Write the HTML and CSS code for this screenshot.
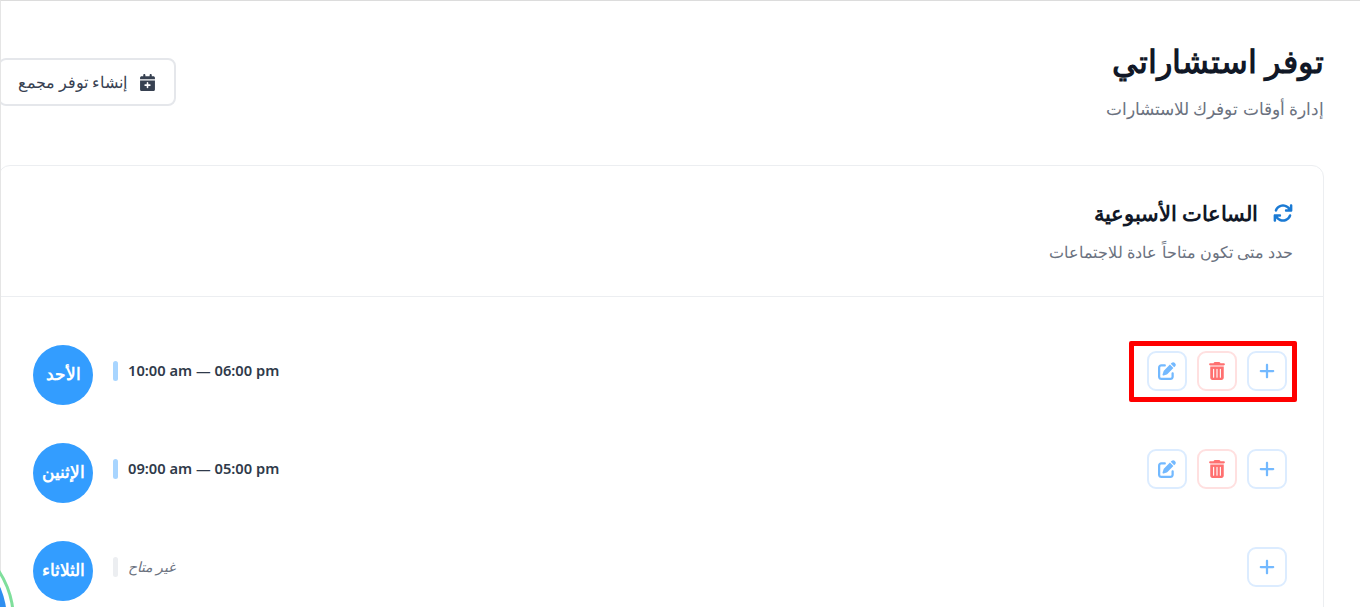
FILE: index.html
```html
<!DOCTYPE html>
<html lang="ar" dir="rtl">
<head>
    <meta charset="UTF-8">
    <meta name="viewport" content="width=device-width, initial-scale=1.0">
    <title>توفر استشاراتي</title>
    <link rel="stylesheet" href="styles.css">
</head>
<body>
    <main class="page">
        <header class="page-header">
            <div>
                <h1 class="page-title">توفر استشاراتي</h1>
                <p class="page-subtitle">إدارة أوقات توفرك للاستشارات</p>
            </div>
            <button class="btn-create">
                <svg class="icon-cal" viewBox="0 0 448 512"><path d="M128 0c17.700 0 32 14.300 32 32v32h128V32c0-17.700 14.300-32 32-32s32 14.300 32 32v32h48c26.500 0 48 21.500 48 48v48H0v-48c0-26.500 21.500-48 48-48h48V32c0-17.700 14.300-32 32-32zM0 192h448v272c0 26.500-21.500 48-48 48H48c-26.500 0-48-21.500-48-48V192zm224 48c-13.300 0-24 10.700-24 24v48h-48c-13.300 0-24 10.700-24 24s10.700 24 24 24h48v48c0 13.300 10.700 24 24 24s24-10.700 24-24v-48h48c13.300 0 24-10.700 24-24s-10.700-24-24-24h-48v-48c0-13.300-10.700-24-24-24z"/></svg>
                إنشاء توفر مجمع
            </button>
        </header>

        <section class="card">
            <div class="card-head">
                <h2 class="card-title">
                    <svg class="icon-sync" viewBox="0 0 512 512"><path d="M105.100 202.600c7.700-21.800 20.200-42.300 37.800-59.800 62.500-62.500 163.800-62.500 226.300 0l17.100 17.200H336c-17.700 0-32 14.300-32 32s14.300 32 32 32h127.900c17.700 0 32-14.300 32-32V64c0-17.700-14.300-32-32-32s-32 14.300-32 32v51.200l-17.500-17.600c-87.500-87.500-229.300-87.500-316.800 0-24.400 24.400-41.800 53.100-52.300 83.800-5.800 16.700 3 34.900 19.600 40.800s34.900-3 40.800-19.600zM39 289.300c-5 1.500-9.800 4.200-13.700 8.200-4 4-6.700 8.800-8.100 14-.3 1.200-.6 2.500-.8 3.800-.3 1.700-.4 3.400-.4 5.100V448c0 17.700 14.300 32 32 32s32-14.300 32-32v-51.100l17.600 17.500c87.500 87.400 229.300 87.400 316.700 0 24.400-24.400 41.900-53.100 52.400-83.700 5.800-16.700-3-34.900-19.600-40.800s-34.900 3-40.800 19.600c-7.700 21.800-20.200 42.300-37.800 59.800-62.500 62.500-163.800 62.500-226.300 0l-.1-.1-17.100-17.100H176c17.700 0 32-14.300 32-32s-14.300-32-32-32H48.400c-1.600 0-3.200.1-4.800.3s-3.100.5-4.600 1z"/></svg>
                    الساعات الأسبوعية
                </h2>
                <p class="card-desc">حدد متى تكون متاحاً عادة للاجتماعات</p>
            </div>
            <div class="days">
                <div class="day">
                    <div class="actions actions-marked">
                        <button class="act act-blue"><svg class="icon" viewBox="0 0 448 512"><path d="M256 80c0-17.700-14.300-32-32-32s-32 14.300-32 32v144H48c-17.700 0-32 14.300-32 32s14.300 32 32 32h144v144c0 17.700 14.300 32 32 32s32-14.300 32-32V288h144c17.700 0 32-14.300 32-32s-14.300-32-32-32H256V80z"/></svg></button>
                        <button class="act act-red"><svg class="icon" viewBox="0 0 448 512"><path d="M135.200 17.700C140.600 6.800 151.700 0 163.800 0h120.400c12.100 0 23.200 6.800 28.600 17.700L320 32h96c17.700 0 32 14.300 32 32s-14.300 32-32 32H32C14.300 96 0 81.700 0 64s14.300-32 32-32h96l7.200-14.300zM32 128h384v320c0 35.300-28.700 64-64 64H96c-35.300 0-64-28.700-64-64V128zm96 64c-8.800 0-16 7.200-16 16v224c0 8.800 7.200 16 16 16s16-7.200 16-16V208c0-8.800-7.200-16-16-16zm96 0c-8.800 0-16 7.200-16 16v224c0 8.800 7.200 16 16 16s16-7.200 16-16V208c0-8.800-7.200-16-16-16zm96 0c-8.800 0-16 7.200-16 16v224c0 8.800 7.200 16 16 16s16-7.200 16-16V208c0-8.800-7.200-16-16-16z"/></svg></button>
                        <button class="act act-blue"><svg class="icon" viewBox="0 0 512 512"><path d="M471.600 21.700c-21.900-21.900-57.300-21.900-79.200 0l-30.100 30 97.900 97.900 30.100-30.100c21.900-21.900 21.900-57.300 0-79.200l-18.700-18.600zM172.400 241.700c-6.100 6.100-10.800 13.600-13.500 21.900l-29.600 88.800c-2.900 8.600-.6 18.100 5.800 24.600s15.900 8.700 24.600 5.800l88.800-29.600c8.200-2.700 15.700-7.400 21.900-13.500l167.300-167.500-97.900-97.900-167.400 167.400zM96 64c-53 0-96 43-96 96v256c0 53 43 96 96 96h256c53 0 96-43 96-96v-96c0-17.700-14.300-32-32-32s-32 14.300-32 32v96c0 17.700-14.300 32-32 32H96c-17.700 0-32-14.300-32-32V160c0-17.700 14.300-32 32-32h96c17.700 0 32-14.300 32-32s-14.300-32-32-32H96z"/></svg></button>
                    </div>
                    <div class="slot">
                        <span class="time" dir="ltr">10:00 am — 06:00 pm</span>
                        <span class="bar"></span>
                        <span class="badge">الأحد</span>
                    </div>
                </div>
                <div class="day">
                    <div class="actions">
                        <button class="act act-blue"><svg class="icon" viewBox="0 0 448 512"><path d="M256 80c0-17.700-14.300-32-32-32s-32 14.300-32 32v144H48c-17.700 0-32 14.300-32 32s14.300 32 32 32h144v144c0 17.700 14.300 32 32 32s32-14.300 32-32V288h144c17.700 0 32-14.300 32-32s-14.300-32-32-32H256V80z"/></svg></button>
                        <button class="act act-red"><svg class="icon" viewBox="0 0 448 512"><path d="M135.200 17.700C140.600 6.800 151.700 0 163.800 0h120.400c12.100 0 23.200 6.800 28.600 17.700L320 32h96c17.700 0 32 14.300 32 32s-14.300 32-32 32H32C14.300 96 0 81.700 0 64s14.300-32 32-32h96l7.200-14.300zM32 128h384v320c0 35.300-28.700 64-64 64H96c-35.300 0-64-28.700-64-64V128zm96 64c-8.800 0-16 7.200-16 16v224c0 8.800 7.200 16 16 16s16-7.200 16-16V208c0-8.800-7.200-16-16-16zm96 0c-8.800 0-16 7.200-16 16v224c0 8.800 7.200 16 16 16s16-7.200 16-16V208c0-8.800-7.200-16-16-16zm96 0c-8.800 0-16 7.200-16 16v224c0 8.800 7.200 16 16 16s16-7.200 16-16V208c0-8.800-7.200-16-16-16z"/></svg></button>
                        <button class="act act-blue"><svg class="icon" viewBox="0 0 512 512"><path d="M471.600 21.700c-21.900-21.900-57.300-21.900-79.200 0l-30.100 30 97.900 97.900 30.100-30.100c21.900-21.900 21.900-57.300 0-79.200l-18.700-18.600zM172.400 241.700c-6.100 6.100-10.800 13.600-13.500 21.900l-29.600 88.800c-2.900 8.600-.6 18.100 5.800 24.600s15.900 8.700 24.600 5.800l88.800-29.600c8.200-2.700 15.700-7.400 21.900-13.500l167.300-167.500-97.900-97.900-167.400 167.400zM96 64c-53 0-96 43-96 96v256c0 53 43 96 96 96h256c53 0 96-43 96-96v-96c0-17.700-14.300-32-32-32s-32 14.300-32 32v96c0 17.700-14.300 32-32 32H96c-17.700 0-32-14.300-32-32V160c0-17.700 14.300-32 32-32h96c17.700 0 32-14.300 32-32s-14.300-32-32-32H96z"/></svg></button>
                    </div>
                    <div class="slot">
                        <span class="time" dir="ltr">09:00 am — 05:00 pm</span>
                        <span class="bar"></span>
                        <span class="badge">الإثنين</span>
                    </div>
                </div>
                <div class="day">
                    <div class="actions">
                        <button class="act act-blue"><svg class="icon" viewBox="0 0 448 512"><path d="M256 80c0-17.700-14.300-32-32-32s-32 14.300-32 32v144H48c-17.700 0-32 14.300-32 32s14.300 32 32 32h144v144c0 17.700 14.300 32 32 32s32-14.300 32-32V288h144c17.700 0 32-14.300 32-32s-14.300-32-32-32H256V80z"/></svg></button>
                    </div>
                    <div class="slot">
                        <span class="time time-off">غير متاح</span>
                        <span class="bar bar-off"></span>
                        <span class="badge">الثلاثاء</span>
                    </div>
                </div>
            </div>
        </section>
    </main>
    <div class="float-widget"></div>
</body>
</html>
```

FILE: styles.css
```css
* {
    box-sizing: border-box;
}

html, body {
    height: 100%;
}

body {
    margin: 0;
    overflow: hidden;
    background: #fff;
    color: #111827;
    font-family: "Noto Sans", sans-serif;
    border-top: 1px solid #dcdcdc;
    border-left: 1px solid #e5e5e5;
}

.page {
    margin-left: -3px;
    padding: 36px 36px 0 0;
}

.page-header {
    display: flex;
    justify-content: space-between;
    align-items: flex-start;
    margin-bottom: 44px;
}

.page-title {
    margin: 0;
    font-size: 32px;
    line-height: 48px;
    font-weight: 700;
    color: #111827;
}

.page-subtitle {
    margin: 12px 0 0;
    font-size: 17px;
    line-height: 24px;
    color: #6b7280;
}

.btn-create {
    display: flex;
    align-items: center;
    gap: 13px;
    height: 48px;
    margin-top: 21px;
    padding: 0 19px 0 18px;
    background: #fff;
    border: 2px solid #e5e7eb;
    border-radius: 8px;
    color: #374151;
    font: 500 16.2px "Noto Sans", sans-serif;
}

.icon-cal {
    width: 15px;
    height: 17px;
    fill: #374151;
}

.card {
    border: 1px solid #eceef1;
    border-radius: 12px;
    height: 500px;
}

.card-head {
    padding: 32px 30px 32px;
    border-bottom: 1px solid #eceef1;
}

.card-title {
    display: flex;
    align-items: center;
    gap: 15px;
    margin: 0;
    font-size: 21px;
    line-height: 30px;
    font-weight: 700;
}

.icon-sync {
    width: 20px;
    height: 20px;
    fill: #1a7ad4;
}

.card-desc {
    margin: 12px 0 0;
    font-size: 16px;
    line-height: 24px;
    color: #6b7280;
}

.days {
    display: flex;
    flex-direction: column;
    gap: 38px;
    padding: 44px 36px 0 34px;
}

.day {
    display: flex;
    justify-content: space-between;
    align-items: center;
    height: 60px;
}

.actions {
    display: flex;
    gap: 10px;
}

.actions-marked {
    position: relative;
}

/* red mark drawn over the first row's buttons */
.actions-marked::after {
    content: "";
    position: absolute;
    top: -10px;
    bottom: -11px;
    left: -18px;
    right: -10px;
    border: 5px solid #f00;
    border-radius: 2px;
}

.act {
    display: flex;
    align-items: center;
    justify-content: center;
    width: 40px;
    height: 40px;
    padding: 0;
    background: #fff;
    border: 2px solid #dcecff;
    border-radius: 9px;
}

.act-red {
    border-color: #ffe0e0;
}

.icon {
    width: 18px;
    height: 18px;
    fill: #73b9ff;
}

.act-red .icon {
    fill: #ff7070;
}

.slot {
    display: flex;
    align-items: center;
    gap: 10px;
}

.badge {
    display: flex;
    align-items: center;
    justify-content: center;
    width: 60px;
    height: 60px;
    margin: 3.5px 10px -3.5px 0;
    padding-bottom: 3px;
    border-radius: 50%;
    background: #339dff;
    color: #fff;
    font-size: 16.5px;
    font-weight: 700;
}

.bar {
    width: 5px;
    height: 20px;
    border-radius: 3px;
    background: #a8d5ff;
}

.bar-off {
    background: #eceef1;
}

.time {
    width: 152px;
    margin-bottom: 2px;
    font-size: 14.7px;
    font-weight: 600;
    color: #2f3a4a;
    text-align: left;
}

.time-off {
    font-size: 14px;
    font-weight: 500;
    font-style: italic;
    color: #6b7280;
}

.float-widget {
    position: fixed;
    left: -167px;
    bottom: -104px;
    width: 182px;
    height: 182px;
    border-radius: 50%;
    border: 3px solid #7fdf9c;
    background: #fff;
}

.float-widget::after {
    content: "";
    position: absolute;
    inset: 5px;
    border-radius: 50%;
    background: #2f8ff0;
}
```
